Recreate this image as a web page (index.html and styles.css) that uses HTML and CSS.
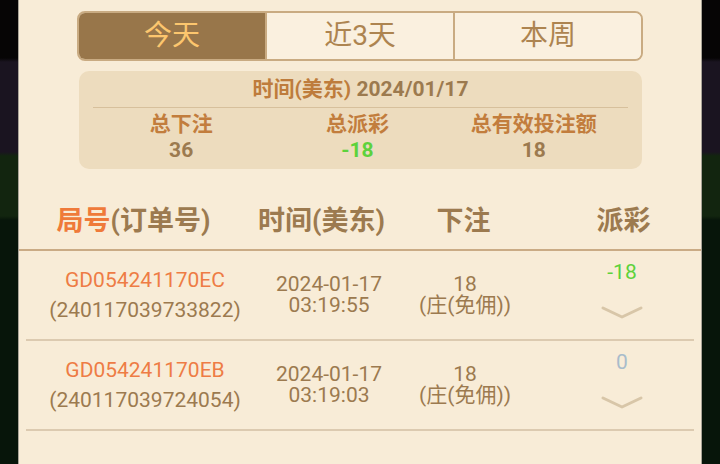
FILE: index.html
```html
<!DOCTYPE html>
<html>
    <head>
        <meta charset="utf-8">
        <link rel="stylesheet" href="styles.css">
    </head>
    <body>
        <div class="panel">
            <div class="tabs">
                <div class="tab active">今天</div>
                <div class="tab">近3天</div>
                <div class="tab">本周</div>
            </div>

            <div class="summary">
                <div class="summary-title"><span class="hl">时间(美东)</span> 2024/01/17</div>
                <div class="stats">
                    <div class="stat">
                        <div class="stat-label">总下注</div>
                        <div class="stat-value">36</div>
                    </div>
                    <div class="stat">
                        <div class="stat-label">总派彩</div>
                        <div class="stat-value green">-18</div>
                    </div>
                    <div class="stat">
                        <div class="stat-label">总有效投注额</div>
                        <div class="stat-value">18</div>
                    </div>
                </div>
            </div>

            <div class="table-head">
                <div class="th th-id"><span class="hl-orange">局号</span>(订单号)</div>
                <div class="th">时间(美东)</div>
                <div class="th">下注</div>
                <div class="th th-win">派彩</div>
            </div>

            <div class="rows">
                <div class="row">
                    <div class="cell cell-id">
                        <div class="order">GD054241170EC</div>
                        <div>(240117039733822)</div>
                    </div>
                    <div class="cell cell-time">
                        <div>2024-01-17</div>
                        <div>03:19:55</div>
                    </div>
                    <div class="cell cell-bet">
                        <div>18</div>
                        <div>(庄(免佣))</div>
                    </div>
                    <div class="cell cell-win">
                        <div class="win green">-18</div>
                        <svg class="chevron" width="42" height="14" viewBox="0 0 42 14">
                            <polyline points="2,3 21,12 40,3" fill="none" stroke="#d8c6a8" stroke-width="3" stroke-linecap="round" stroke-linejoin="round"/>
                        </svg>
                    </div>
                </div>
                <div class="row">
                    <div class="cell cell-id">
                        <div class="order">GD054241170EB</div>
                        <div>(240117039724054)</div>
                    </div>
                    <div class="cell cell-time">
                        <div>2024-01-17</div>
                        <div>03:19:03</div>
                    </div>
                    <div class="cell cell-bet">
                        <div>18</div>
                        <div>(庄(免佣))</div>
                    </div>
                    <div class="cell cell-win">
                        <div class="win zero">0</div>
                        <svg class="chevron" width="42" height="14" viewBox="0 0 42 14">
                            <polyline points="2,3 21,12 40,3" fill="none" stroke="#d8c6a8" stroke-width="3" stroke-linecap="round" stroke-linejoin="round"/>
                        </svg>
                    </div>
                </div>
            </div>
        </div>
    </body>
</html>
```

FILE: styles.css
```css
*{
    padding: 0;
    margin: 0;
    box-sizing: border-box;
}
html,body{
    height: 100%;
    overflow: hidden;
}
body{
    font-family: Roboto, "Noto Sans CJK SC", sans-serif;
    color: #9c7a4f;
    background: linear-gradient(to bottom, #060505 0, #060505 58px, #1a1420 62px, #1a1420 152px, #12250f 156px, #12250f 216px, #07150a 220px, #07150a 100%);
}
.panel{
    width: 684px;
    height: 464px;
    margin-left: 18px;
    background-color: #f8ecd7;
    border-left: 1px solid #a9a498;
    border-right: 1px solid #a9a498;
    padding-top: 11px;
}

/* 顶部切换 */
.tabs{
    display: flex;
    height: 50px;
    margin: 0 58px;
    border: 2px solid #c9ab82;
    border-radius: 8px;
    overflow: hidden;
}
.tab{
    flex: 1;
    text-align: center;
    line-height: 46px;
    font-size: 28px;
    color: #ad8450;
    background-color: #faf0df;
    border-left: 2px solid #c9ab82;
}
.tab:first-child{
    border-left: none;
}
.tab.active{
    background-color: #98764a;
    color: #fcc66e;
}

/* 汇总 */
.summary{
    margin: 10px 59px 0 60px;
    height: 98px;
    background-color: #eddcbe;
    border-radius: 10px;
    padding: 0 14px;
    font-weight: bold;
    font-size: 21px;
}
.summary-title{
    height: 37px;
    line-height: 36px;
    text-align: center;
    color: #9c7a4f;
    border-bottom: 1px solid #d7c09c;
}
.hl{
    color: #be7c3c;
}
.stats{
    display: flex;
    padding-right: 6px;
}
.stat{
    flex: 1;
    text-align: center;
}
.stat-label{
    line-height: 32px;
    color: #c27d3d;
}
.stat-value{
    line-height: 20px;
    color: #9c7a4f;
}
.green{
    color: #5dd23c !important;
}

/* 表头 */
.table-head{
    display: grid;
    grid-template-columns: 215px 161px 123px 1fr;
    padding: 34px 7px 10px;
    border-bottom: 2px solid #caab85;
    font-size: 27px;
    font-weight: bold;
    line-height: 36px;
}
.th{
    text-align: center;
}
.th-win{
    padding-left: 28px;
}
.hl-orange{
    color: #ef7a3a;
}

/* 列表 */
.rows{
    padding: 0 7px;
}
.row{
    display: grid;
    grid-template-columns: 238px 130px 142px 1fr;
    height: 90px;
    border-bottom: 2px solid #dccab0;
    font-size: 21px;
}
.cell{
    display: flex;
    flex-direction: column;
    justify-content: center;
    align-items: center;
}
.cell-id{
    line-height: 30px;
}
.order{
    color: #ee7c45;
}
.cell-time{
    line-height: 21px;
}
.cell-bet{
    line-height: 21px;
}
.cell-win{
    justify-content: flex-start;
    padding-left: 14px;
    padding-top: 9px;
}
.win{
    line-height: 24px;
}
.zero{
    color: #a9bccb;
}
.chevron{
    display: block;
    margin-top: 21px;
}
```
